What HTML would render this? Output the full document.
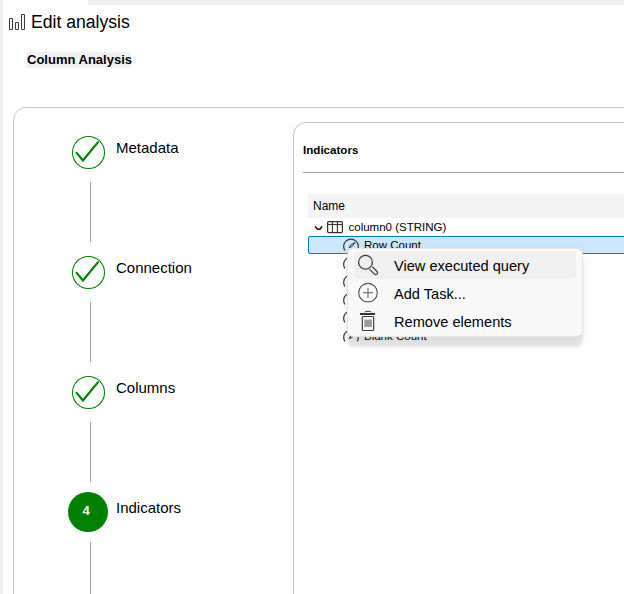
<!DOCTYPE html>
<html><head><meta charset="utf-8">
<style>
html,body{margin:0;padding:0;}
body{width:624px;height:594px;overflow:hidden;position:relative;background:#fff;font-family:"Liberation Sans",sans-serif;color:#000;}
.abs{position:absolute;}
.strip-left{left:0;top:0;width:3px;height:594px;background:#f0f0f0;}
.strip-top{left:88px;top:0;width:536px;height:5px;background:#f0f0f0;}
.title{left:31px;top:12px;font-size:17.6px;line-height:20px;white-space:nowrap;}
.sub{left:26px;top:52px;width:105px;height:16px;background:#f0f0f0;}
.subt{left:27px;top:52px;font-size:13px;font-weight:bold;line-height:16px;white-space:nowrap;color:#000;}
.outer{left:13px;top:107px;width:700px;height:600px;border:1px solid #c8c8c8;border-radius:13px;box-sizing:border-box;}
.inner{left:293px;top:122px;width:500px;height:600px;border:1px solid #c4c4c4;border-radius:13px;box-sizing:border-box;}
.vline{left:90px;width:1px;background:#a0a0a0;}
.step{left:116px;font-size:15px;line-height:18px;white-space:nowrap;color:#000;}
.txt{white-space:nowrap;}
</style></head><body>
<div class="abs strip-left"></div>
<div class="abs strip-top"></div>

<svg class="abs" style="left:8px;top:13px" width="20" height="18" viewBox="0 0 20 18">
  <rect x="1.5" y="5.5" width="3" height="11" rx="0.7" fill="none" stroke="#3c3c3c" stroke-width="1.05"/>
  <rect x="7.5" y="9.5" width="3" height="7" rx="0.7" fill="none" stroke="#3c3c3c" stroke-width="1.05"/>
  <rect x="13.5" y="1.5" width="3" height="15" rx="0.7" fill="none" stroke="#3c3c3c" stroke-width="1.05"/>
</svg>
<div class="abs title">Edit analysis</div>

<div class="abs sub"></div>
<div class="abs subt">Column Analysis</div>

<div class="abs outer"></div>

<!-- stepper -->
<div class="abs vline" style="top:182px;height:60px"></div>
<div class="abs vline" style="top:302px;height:60px"></div>
<div class="abs vline" style="top:422px;height:60px"></div>
<div class="abs vline" style="top:542px;height:60px"></div>

<svg class="abs" style="left:71px;top:135px" width="36" height="36" viewBox="0 0 36 36">
  <circle cx="17.5" cy="17.5" r="16" fill="none" stroke="#008000" stroke-width="1.05"/>
  <polyline points="5.1,17.1 11.9,25.4 27.5,6.6" fill="none" stroke="#008000" stroke-width="2.2"/>
</svg>
<div class="abs step" style="top:139px">Metadata</div>

<svg class="abs" style="left:71px;top:255px" width="36" height="36" viewBox="0 0 36 36">
  <circle cx="17.5" cy="17.5" r="16" fill="none" stroke="#008000" stroke-width="1.05"/>
  <polyline points="5.1,17.1 11.9,25.4 27.5,6.6" fill="none" stroke="#008000" stroke-width="2.2"/>
</svg>
<div class="abs step" style="top:259px">Connection</div>

<svg class="abs" style="left:71px;top:375px" width="36" height="36" viewBox="0 0 36 36">
  <circle cx="17.5" cy="17.5" r="16" fill="none" stroke="#008000" stroke-width="1.05"/>
  <polyline points="5.1,17.1 11.9,25.4 27.5,6.6" fill="none" stroke="#008000" stroke-width="2.2"/>
</svg>
<div class="abs step" style="top:379px">Columns</div>

<div class="abs" style="left:68px;top:492px;width:40px;height:40px;border-radius:50%;background:#008000;"></div>
<div class="abs txt" style="left:68px;top:502px;width:36px;text-align:center;color:#fff;font-size:13px;font-weight:bold;line-height:18px;">4</div>
<div class="abs step" style="top:499px">Indicators</div>

<!-- inner panel -->
<div class="abs inner"></div>
<div class="abs txt" style="left:303px;top:142px;font-size:11.6px;font-weight:bold;line-height:16px;">Indicators</div>
<div class="abs" style="left:303px;top:172px;width:330px;height:1px;background:#a0a0a0"></div>
<div class="abs" style="left:308px;top:194px;width:330px;height:24px;background:#f4f4f4"></div>
<div class="abs txt" style="left:313px;top:198px;font-size:12px;line-height:16px;">Name</div>


<!-- tree -->
<svg class="abs" style="left:313px;top:224px" width="11" height="7" viewBox="0 0 11 7">
  <polyline points="2,2.4 4.6,5.3 7,5.2 9.1,2.3" fill="none" stroke="#111" stroke-width="1.45" stroke-linejoin="round"/>
</svg>
<svg class="abs" style="left:326px;top:220px" width="18" height="14" viewBox="0 0 18 14">
  <rect x="1.6" y="1.6" width="14.8" height="11" rx="1" fill="none" stroke="#333" stroke-width="1.2"/>
  <line x1="1.6" y1="4.5" x2="16.4" y2="4.5" stroke="#333" stroke-width="1.1"/>
  <line x1="6.4" y1="1.6" x2="6.4" y2="12.6" stroke="#333" stroke-width="1.1"/>
  <line x1="11.4" y1="1.6" x2="11.4" y2="12.6" stroke="#333" stroke-width="1.1"/>
</svg>
<div class="abs txt" style="left:348.5px;top:219px;font-size:11.5px;line-height:16px;">column0 (STRING)</div>

<div class="abs" style="left:308px;top:236px;width:340px;height:18px;box-sizing:border-box;border:1px solid #0078d7;border-radius:2px;background:#cce8ff"></div>
<svg class="abs" style="left:342px;top:236px" width="18" height="18" viewBox="0 0 18 18">
  <path d="M2.8,14.4 A7.35,7.35 0 1 1 15.2,14.4" fill="none" stroke="#333" stroke-width="1.2"/>
  <path d="M7.2,11.6 L8.8,8.8 L13,6.5 L10.2,10.4 Z" fill="none" stroke="#333" stroke-width="1"/>
</svg>
<svg class="abs" style="left:342px;top:253.8px" width="18" height="18" viewBox="0 0 18 18">
  <path d="M2.8,14.4 A7.35,7.35 0 1 1 15.2,14.4" fill="none" stroke="#333" stroke-width="1.2"/>
  <path d="M7.2,11.6 L8.8,8.8 L13,6.5 L10.2,10.4 Z" fill="none" stroke="#333" stroke-width="1"/>
</svg>
<svg class="abs" style="left:342px;top:272px" width="18" height="18" viewBox="0 0 18 18">
  <path d="M2.8,14.4 A7.35,7.35 0 1 1 15.2,14.4" fill="none" stroke="#333" stroke-width="1.2"/>
  <path d="M7.2,11.6 L8.8,8.8 L13,6.5 L10.2,10.4 Z" fill="none" stroke="#333" stroke-width="1"/>
</svg>
<svg class="abs" style="left:342px;top:290.1px" width="18" height="18" viewBox="0 0 18 18">
  <path d="M2.8,14.4 A7.35,7.35 0 1 1 15.2,14.4" fill="none" stroke="#333" stroke-width="1.2"/>
  <path d="M7.2,11.6 L8.8,8.8 L13,6.5 L10.2,10.4 Z" fill="none" stroke="#333" stroke-width="1"/>
</svg>
<svg class="abs" style="left:342px;top:308.3px" width="18" height="18" viewBox="0 0 18 18">
  <path d="M2.8,14.4 A7.35,7.35 0 1 1 15.2,14.4" fill="none" stroke="#333" stroke-width="1.2"/>
  <path d="M7.2,11.6 L8.8,8.8 L13,6.5 L10.2,10.4 Z" fill="none" stroke="#333" stroke-width="1"/>
</svg>
<svg class="abs" style="left:342px;top:326.5px" width="18" height="18" viewBox="0 0 18 18">
  <path d="M2.8,14.4 A7.35,7.35 0 1 1 15.2,14.4" fill="none" stroke="#333" stroke-width="1.2"/>
  <path d="M7.2,11.6 L8.8,8.8 L13,6.5 L10.2,10.4 Z" fill="none" stroke="#333" stroke-width="1"/>
</svg>

<div class="abs txt" style="left:364px;top:237px;font-size:11.5px;line-height:16px;">Row Count</div>
<div class="abs txt" style="left:364px;top:255px;font-size:11.5px;line-height:16px;">Null Count</div>
<div class="abs txt" style="left:364px;top:273px;font-size:11.5px;line-height:16px;">Distinct Count</div>
<div class="abs txt" style="left:364px;top:291.5px;font-size:11.5px;line-height:16px;">Unique Count</div>
<div class="abs txt" style="left:364px;top:309.5px;font-size:11.5px;line-height:16px;">Duplicate Count</div>
<div class="abs txt" style="left:364px;top:328px;font-size:11.5px;line-height:16px;">Blank Count</div>

<!-- context menu -->
<div class="abs menu" style="left:347px;top:248px;width:236px;height:89px;box-sizing:border-box;border-radius:7px;background:#f9f9f9;border:1px solid #e6e6e6;box-shadow:0 10px 3px 0 rgba(0,0,0,0.1), 0 2px 16px rgba(0,0,0,0.06);"></div>
<div class="abs" style="left:354px;top:251px;width:222px;height:28px;border-radius:4px;background:#f0f0f0"></div>
<svg class="abs" style="left:354px;top:251px" width="28" height="28" viewBox="0 0 28 28">
  <circle cx="11.5" cy="11.3" r="6.9" fill="none" stroke="#3a3a3a" stroke-width="1.25"/>
  <path d="M15.6,18.3 L20.4,23.1 A1.8,1.8 0 0 0 23,20.5 L18.2,15.7" fill="none" stroke="#3a3a3a" stroke-width="1.2"/>
</svg>
<div class="abs txt" style="left:394px;top:257px;font-size:14.6px;line-height:18px;color:#000">View executed query</div>
<svg class="abs" style="left:354px;top:279px" width="28" height="28" viewBox="0 0 28 28">
  <circle cx="14" cy="13.7" r="9.3" fill="none" stroke="#505050" stroke-width="1.1"/>
  <line x1="9" y1="13.7" x2="19" y2="13.7" stroke="#7a7a7a" stroke-width="1.3"/>
  <line x1="14" y1="8.8" x2="14" y2="18.8" stroke="#7a7a7a" stroke-width="1.3"/>
</svg>
<div class="abs txt" style="left:394px;top:284.5px;font-size:14.6px;line-height:18px;color:#000">Add Task...</div>
<svg class="abs" style="left:354px;top:307px" width="28" height="28" viewBox="0 0 28 28">
  <path d="M11,5.3 Q11,4.4 12,4.4 L16,4.4 Q17,4.4 17,5.3" fill="none" stroke="#3a3a3a" stroke-width="1"/>
  <line x1="6" y1="7" x2="21" y2="7" stroke="#2a2a2a" stroke-width="1.9"/>
  <rect x="8.3" y="9.5" width="11.4" height="14" rx="1.3" fill="none" stroke="#3a3a3a" stroke-width="1.2"/>
  <rect x="10.3" y="12.6" width="7.6" height="7.4" fill="#9a9a9a"/>
</svg>
<div class="abs txt" style="left:394px;top:313px;font-size:14.6px;line-height:18px;color:#000">Remove elements</div>
</body></html>
